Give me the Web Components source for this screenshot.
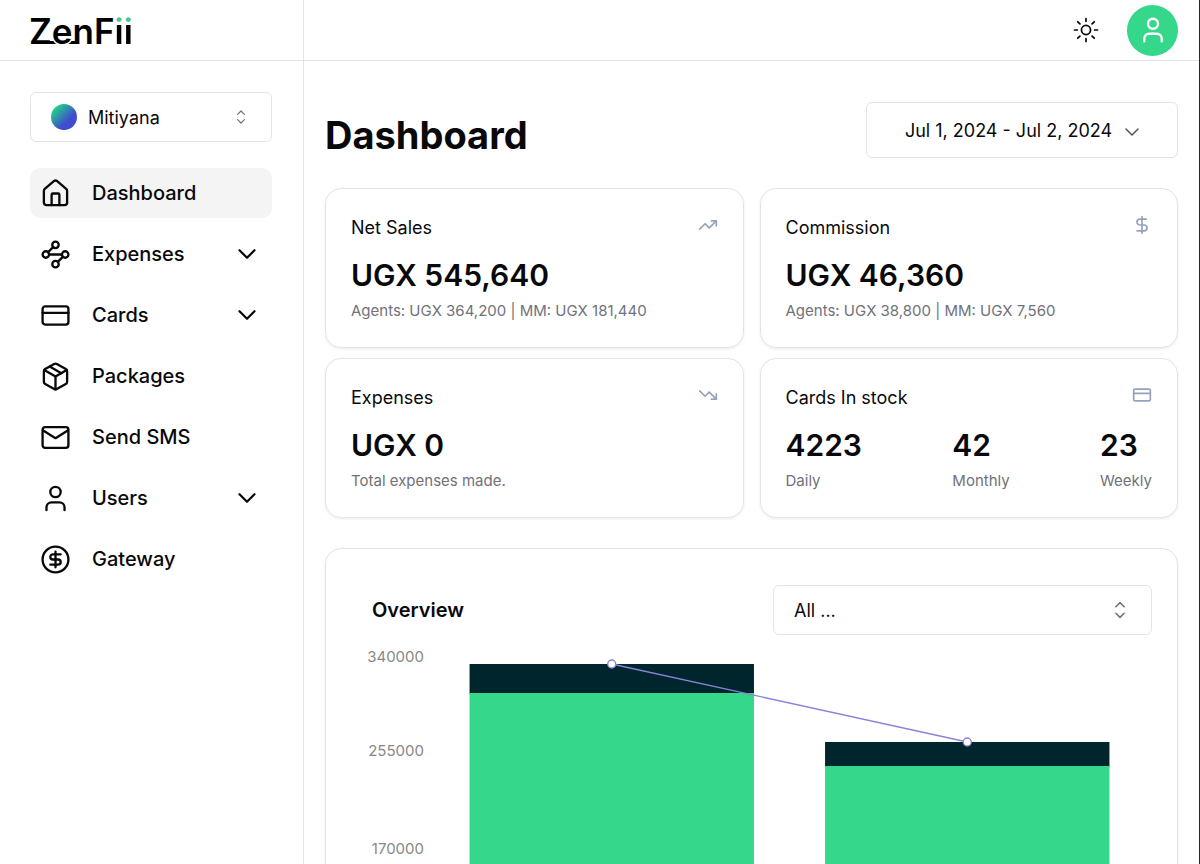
<!DOCTYPE html>
<html lang="en">
<head>
<meta charset="utf-8">
<title>ZenFii Dashboard</title>
<style>
  :root {
    --line: #e4e4e7;
    --ink: #09090b;
    --muted: #71717a;
    --brand: #35d78b;
    --deep: #00252c;
  }
  body { margin: 0; font-family: Inter, "Liberation Sans", sans-serif; color: var(--ink); background: #fff; }
</style>
</head>
<body>
<zen-app>
  <zen-logo slot="brand"></zen-logo>
  <zen-select slot="side" label="Branch" value="Mitiyana" dot></zen-select>
  <zen-nav slot="side">
    <zen-nav-item icon="home" active>Dashboard</zen-nav-item>
    <zen-nav-item icon="waypoints" expandable>Expenses</zen-nav-item>
    <zen-nav-item icon="card" expandable>Cards</zen-nav-item>
    <zen-nav-item icon="package">Packages</zen-nav-item>
    <zen-nav-item icon="mail">Send SMS</zen-nav-item>
    <zen-nav-item icon="user" expandable>Users</zen-nav-item>
    <zen-nav-item icon="coin">Gateway</zen-nav-item>
  </zen-nav>
  <zen-actions slot="top"></zen-actions>
  <zen-page-head slot="main" range="Jul 1, 2024 - Jul 2, 2024">Dashboard</zen-page-head>
  <zen-stats slot="main">
    <zen-card icon="up" heading="Net Sales"><zen-figure value="UGX 545,640">Agents: UGX 364,200 | MM: UGX 181,440</zen-figure></zen-card>
    <zen-card icon="dollar" heading="Commission"><zen-figure value="UGX 46,360">Agents: UGX 38,800 | MM: UGX 7,560</zen-figure></zen-card>
    <zen-card icon="down" heading="Expenses"><zen-figure value="UGX 0">Total expenses made.</zen-figure></zen-card>
    <zen-card icon="card" heading="Cards In stock">
      <zen-figure value="4223">Daily</zen-figure>
      <zen-figure value="42">Monthly</zen-figure>
      <zen-figure value="23">Weekly</zen-figure>
    </zen-card>
  </zen-stats>
  <zen-overview slot="main"></zen-overview>
</zen-app>

<script>
const ICONS = {
  home: '<path d="M15 21v-8a1 1 0 0 0-1-1h-4a1 1 0 0 0-1 1v8"/><path d="M3 10a2 2 0 0 1 .709-1.528l7-5.999a2 2 0 0 1 2.582 0l7 5.999A2 2 0 0 1 21 10v9a2 2 0 0 1-2 2H5a2 2 0 0 1-2-2z"/>',
  waypoints: '<circle cx="12" cy="4.5" r="2.5"/><path d="m10.2 6.3-3.9 3.9"/><circle cx="4.5" cy="12" r="2.5"/><path d="M7 12h10"/><circle cx="19.5" cy="12" r="2.5"/><path d="m13.8 17.7 3.9-3.9"/><circle cx="12" cy="19.5" r="2.5"/>',
  card: '<rect width="20" height="14" x="2" y="5" rx="2"/><path d="M2 10h20"/>',
  package: '<path d="m7.5 4.27 9 5.15"/><path d="M21 8a2 2 0 0 0-1-1.73l-7-4a2 2 0 0 0-2 0l-7 4A2 2 0 0 0 3 8v8a2 2 0 0 0 1 1.73l7 4a2 2 0 0 0 2 0l7-4A2 2 0 0 0 21 16Z"/><path d="m3.3 7 8.7 5 8.7-5"/><path d="M12 22V12"/>',
  mail: '<rect width="20" height="16" x="2" y="4" rx="2"/><path d="m2.5 6.5 9.5 6 9.5-6"/>',
  user: '<path d="M19 21v-2a4 4 0 0 0-4-4H9a4 4 0 0 0-4 4v2"/><circle cx="12" cy="7" r="4"/>',
  coin: '<circle cx="12" cy="12" r="10"/><path d="M16 8h-6a2 2 0 1 0 0 4h4a2 2 0 1 1 0 4H8"/><path d="M12 18V6"/>',
  dollar: '<path d="M12 2v20"/><path d="M17 5H9.5a3.5 3.5 0 0 0 0 7h5a3.5 3.5 0 0 1 0 7H6"/>',
  up: '<path d="m22 7-8.5 8.5-5-5L2 17"/><path d="M16 7h6v6"/>',
  down: '<path d="m22 17-8.5-8.5-5 5L2 7"/><path d="M16 17h6v-6"/>',
  chevron: '<path d="m6 9 6 6 6-6"/>',
  updown: '<path d="m7.5 8.5 4.5-4.5 4.5 4.5M7.5 15.5 12 20l4.5-4.5"/>',
  sun: '<circle cx="12" cy="12" r="4.2"/><path d="M12 1.4v2.6M12 20v2.6M1.4 12H4M20 12h2.6M4.4 4.4l2 2M17.6 17.6l2 2M4.4 19.6l2-2M17.6 6.4l2-2"/>'
};
const icon = (name, size, stroke = 2) =>
  `<svg width="${size}" height="${size}" viewBox="0 0 24 24" fill="none" stroke="currentColor" stroke-width="${stroke}" stroke-linecap="round" stroke-linejoin="round" aria-hidden="true">${ICONS[name]}</svg>`;

const define = (tag, render) => customElements.define(tag, class extends HTMLElement {
  connectedCallback() {
    if (this.shadowRoot) return;
    const t = document.createElement('template');
    t.innerHTML = '<style>*{box-sizing:border-box}svg{display:block;flex:none}button,select{font:inherit;color:inherit}</style>' + render(this);
    this.attachShadow({ mode: 'open' }).append(t.content.cloneNode(true));
  }
});

define('zen-app', () => `
  <style>
    :host { display: grid; grid-template-columns: 304px minmax(0, 1fr); grid-template-rows: 61px minmax(0, 1fr); height: 100vh; border-right: 1px solid #27272a; box-sizing: border-box; }
    .brand, .top { border-bottom: 1px solid var(--line); display: flex; align-items: center; }
    .brand { padding: 0 29px; }
    .brand, aside { border-right: 1px solid var(--line); }
    .top { justify-content: flex-end; padding: 0 21px; }
    aside { padding: 31px 31px 30px 30px; display: flex; flex-direction: column; gap: 26px; }
    main { padding: 41px 21px 30px; overflow: auto; scrollbar-width: none; display: flex; flex-direction: column; gap: 30px; }
  </style>
  <div class="brand"><slot name="brand"></slot></div>
  <header class="top"><slot name="top"></slot></header>
  <aside><slot name="side"></slot></aside>
  <main><slot name="main"></slot></main>`);

define('zen-logo', () => `
  <style>
    :host { display: block; position: relative; padding-top: 2px; font-size: 35px; line-height: 44px; font-weight: 600; color: #000; isolation: isolate; }
    a { color: inherit; text-decoration: none; }
    .dots { color: transparent; background: linear-gradient(#4cc790 14px, #000 14px); background-clip: text; -webkit-background-clip: text; }
    .halo { text-shadow: -1px 1px #fff, 1px 1px #fff, 0 1px #fff; }
    .bar { position: absolute; z-index: -1; left: 18px; bottom: 9px; width: 30px; height: 3px; background: #000; }
  </style>
  <a href="#">Z<span class="halo">e</span>nF<span class="dots">ii</span></a><span class="bar"></span>`);

define('zen-select', el => `
  <style>
    :host { display: block; }
    .box { display: grid; align-items: center; }
    .box > * { grid-area: 1 / 1; }
    select { appearance: none; width: 100%; height: 50px; border: 1px solid var(--line); border-radius: 6px; background: #fff; font-size: 18px; padding: 0 50px 0 ${el.hasAttribute('dot') ? 57 : 20}px; }
    .dot { width: 26px; height: 26px; margin-left: 21px; border-radius: 50%; background: linear-gradient(135deg, #1fd286 15%, #3f4bd0 65%); pointer-events: none; }
    svg { justify-self: end; margin-right: ${el.hasAttribute('dot') ? 22 : 21}px; color: #71717a; pointer-events: none; }
  </style>
  <div class="box">
    <select aria-label="${el.getAttribute('label')}"><option>${el.getAttribute('value')}</option></select>
    ${el.hasAttribute('dot') ? '<span class="dot"></span>' : ''}
    ${el.hasAttribute('dot') ? icon('updown', 18, 1.6) : icon('updown', 22, 1.7)}
  </div>`);

define('zen-nav', () => `
  <style>:host { display: block } nav { display: flex; flex-direction: column; gap: 11px; }</style>
  <nav><slot></slot></nav>`);

define('zen-nav-item', el => `
  <style>
    :host { display: block; }
    a { display: flex; align-items: center; height: 50px; padding: 0 10px; gap: 21px; border-radius: 10px; font-size: 20px; font-weight: 500; color: var(--ink); text-decoration: none; }
    :host([active]) a { background: #f4f4f5; }
    .label { flex: 1; }
  </style>
  <a href="#">${icon(el.getAttribute('icon'), 31, 1.8)}<span class="label"><slot></slot></span>${el.hasAttribute('expandable') ? icon('chevron', 30, 1.8) : ''}</a>`);

define('zen-actions', () => `
  <style>
    :host { display: flex; align-items: center; gap: 28px; }
    button { border: 0; padding: 0; background: none; display: grid; place-items: center; }
    .me { width: 51px; height: 51px; border-radius: 50%; background: var(--brand); color: #fff; }
  </style>
  <button aria-label="Toggle theme">${icon('sun', 26, 1.6)}</button>
  <button class="me" aria-label="Account">${icon('user', 30, 1.9)}</button>`);

define('zen-page-head', el => `
  <style>
    :host { display: flex; justify-content: space-between; align-items: flex-end; }
    h1 { margin: 0; font-size: 38px; line-height: 46px; font-weight: 700; }
    button { height: 56px; flex: 0 0 312px; display: flex; align-items: center; justify-content: center; gap: 8px; border: 1px solid var(--line); border-radius: 6px; background: #fff; font-size: 18px; padding: 0 0 0 5px; }
    svg { color: #52525b; margin-top: 3px; }
  </style>
  <h1><slot></slot></h1>
  <button><span>${el.getAttribute('range')}</span>${icon('chevron', 24, 1.5)}</button>`);

define('zen-stats', () => `
  <style>:host { display: grid; grid-template-columns: 1fr 1fr; gap: 10px 16px; }</style>
  <slot></slot>`);

define('zen-card', el => `
  <style>
    :host { display: block; border: 1px solid var(--line); border-radius: 16px; padding: 26px 25px; box-shadow: 0 1px 3px rgba(0,0,0,.08); }
    header { display: flex; justify-content: space-between; margin-bottom: 15px; }
    h2 { margin: 0; font-size: 18px; line-height: 26px; font-weight: 400; }
    svg { color: #94a3b8; }
    .figures { display: flex; justify-content: space-between; }
  </style>
  <header><h2>${el.getAttribute('heading')}</h2>${icon(el.getAttribute('icon'), 20, 2)}</header>
  <div class="figures"><slot></slot></div>`);

define('zen-figure', el => `
  <style>
    :host { display: block; }
    strong { display: block; font-size: 30px; line-height: 38px; font-weight: 600; }
    p { margin: 7px 0 0; font-size: 15px; line-height: 20px; color: var(--muted); }
  </style>
  <strong>${el.getAttribute('value')}</strong><p><slot></slot></p>`);

define('zen-overview', () => `
  <style>
    :host { display: block; border: 1px solid var(--line); border-radius: 16px; padding: 36px 25px 30px 46px; box-shadow: 0 1px 3px rgba(0,0,0,.08); }
    header { display: flex; justify-content: space-between; align-items: center; margin-bottom: 13px; }
    h2 { margin: 0; font-size: 20px; line-height: 28px; font-weight: 600; }
    zen-select { flex: 0 1 379px; }
    .chart { display: grid; grid-template-columns: 52px minmax(0, 1fr); gap: 10px; padding-right: 7px; }
    .axis { display: grid; grid-template-rows: 54px 98px 98px; justify-items: end; align-items: center; justify-content: end; align-content: start; font-size: 15px; line-height: 18px; color: #888; }
    .axis :first-child { align-self: start; }
    .plot { width: 100%; height: 397px; }
    .sales { fill: var(--brand); }
    .fees { fill: var(--deep); }
    .trend { stroke: #8884d8; stroke-width: 1.3; fill: #fff; }
  </style>
  <header><h2>Overview</h2><zen-select label="Filter" value="All ..."></zen-select></header>
  <div class="chart">
    <div class="axis"><span>340000</span><span>255000</span><span>170000</span></div>
    <svg class="plot" role="img" aria-label="Daily totals">
      <rect class="fees" x="5%" y="16" width="40%" height="30"/>
      <rect class="sales" x="5%" y="45" width="40%" height="352"/>
      <rect class="fees" x="55%" y="94" width="40%" height="25"/>
      <rect class="sales" x="55%" y="118" width="40%" height="279"/>
      <line class="trend" x1="25%" y1="16" x2="75%" y2="94"/>
      <circle class="trend" cx="25%" cy="16" r="4"/>
      <circle class="trend" cx="75%" cy="94" r="4"/>
    </svg>
  </div>`);
</script>
</body>
</html>
